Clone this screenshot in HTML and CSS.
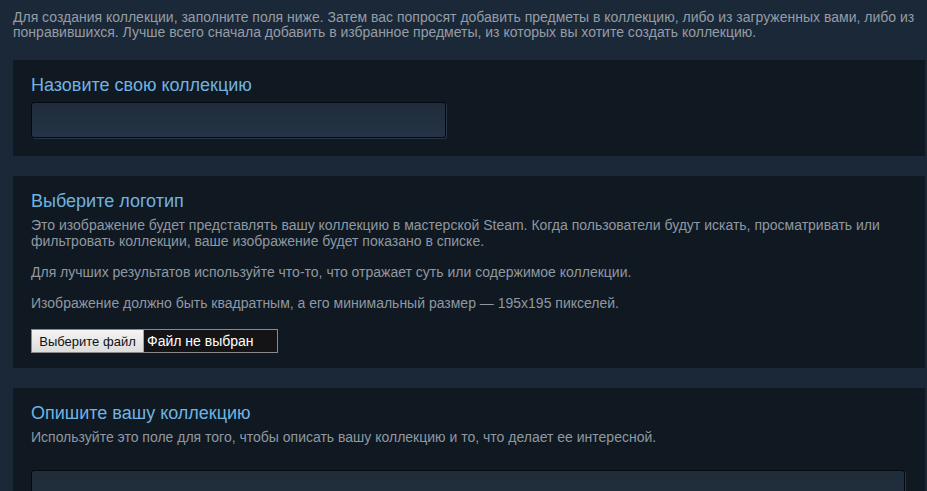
FILE: index.html
```html
<!DOCTYPE html>
<html lang="ru">
<head>
<meta charset="utf-8">
<title>Создание коллекции</title>
<link rel="stylesheet" href="styles.css">
</head>
<body>
<div class="page">
  <p class="intro">Для создания коллекции, заполните поля ниже. Затем вас попросят добавить предметы в коллекцию, либо из загруженных вами, либо из понравившихся. Лучше всего сначала добавить в избранное предметы, из которых вы хотите создать коллекцию.</p>

  <section class="panel panel-name">
    <h2 class="panel-title">Назовите свою коллекцию</h2>
    <div class="text-input"></div>
  </section>

  <section class="panel panel-logo">
    <h2 class="panel-title">Выберите логотип</h2>
    <p class="panel-text">Это изображение будет представлять вашу коллекцию в мастерской Steam. Когда пользователи будут искать, просматривать или фильтровать коллекции, ваше изображение будет показано в списке.</p>
    <p class="panel-text spaced">Для лучших результатов используйте что-то, что отражает суть или содержимое коллекции.</p>
    <p class="panel-text spaced">Изображение должно быть квадратным, а его минимальный размер — 195x195 пикселей.</p>
    <div class="file-picker">
      <span class="file-btn">Выберите файл</span>
      <span class="file-label">Файл не выбран</span>
    </div>
  </section>

  <section class="panel panel-desc">
    <h2 class="panel-title">Опишите вашу коллекцию</h2>
    <p class="panel-text">Используйте это поле для того, чтобы описать вашу коллекцию и то, что делает ее интересной.</p>
    <div class="text-area"></div>
  </section>
</div>
</body>
</html>
```

FILE: styles.css
```css
html, body {
  margin: 0;
  padding: 0;
  background: #1b2838;
  height: 100%;
  overflow: hidden;
}

.page {
  width: 912px;
  padding: 10px 0 0 13px;
  font-family: Arial, "Liberation Sans", sans-serif;
  font-size: 14px;
  display: flex;
  flex-direction: column;
  gap: 20px;
}

.intro {
  margin: 0;
  line-height: 15px;
  color: #959da5;
}

.panel {
  background: #101822;
  padding: 14px 20px 18px 18px;
  display: flex;
  flex-direction: column;
}

.panel-title {
  margin: 0;
  font-size: 18px;
  line-height: 22px;
  font-weight: normal;
  color: #6fb4e0;
}

.panel-text {
  margin: 5px 0 0;
  line-height: 16px;
  color: #8f98a0;
}

.panel-text.spaced {
  margin-top: 15px;
}

.text-input {
  margin-top: 6px;
  width: 413px;
  height: 34px;
  border: 1px solid #06090d;
  border-radius: 3px;
  background: linear-gradient(to bottom, #1f2c3a, #243446);
  box-shadow: 1px 1px 0 rgba(120, 140, 160, 0.25);
}

.panel-logo {
  padding-bottom: 15px;
}

.file-picker {
  margin-top: 18px;
  align-self: flex-start;
  display: flex;
  width: 245px;
  height: 22px;
  border: 1px solid #8a8a8a;
  background: #141417;
}

.file-btn {
  flex: none;
  display: flex;
  align-items: center;
  justify-content: center;
  width: 111px;
  white-space: nowrap;
  background: linear-gradient(to bottom, #f4f4f4, #dcdcdc);
  border-right: 1px solid #a5a5a5;
  color: #111;
  font-size: 13px;
}

.file-label {
  display: flex;
  align-items: center;
  padding-left: 3px;
  white-space: nowrap;
  color: #ffffff;
  font-size: 14px;
  font-weight: normal;
}

.text-area {
  margin-top: 25px;
  height: 120px;
  border: 1px solid #06090d;
  border-radius: 3px;
  background: linear-gradient(to bottom, #1f2c3a, #243446);
  box-shadow: 1px 1px 0 rgba(120, 140, 160, 0.25);
}
```
